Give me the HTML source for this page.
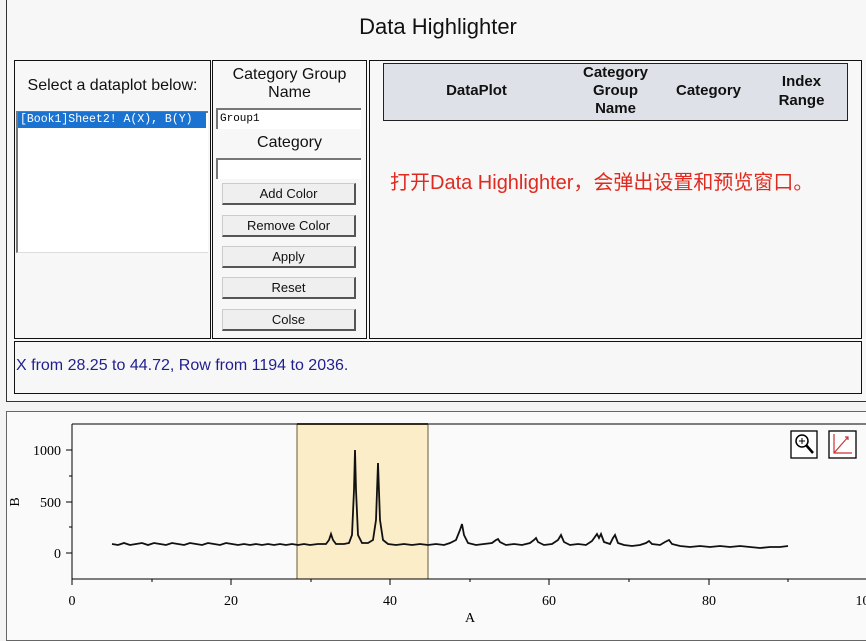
<!DOCTYPE html>
<html><head><meta charset="utf-8"><style>
body{margin:0;width:866px;height:630px;background:#f4f4f4;position:relative;overflow:hidden;font-family:"Liberation Sans",Arial,sans-serif;}
.a{position:absolute;box-sizing:border-box}
.bx{border:1.5px solid #111;background:#f7f7f7}
.btn{position:absolute;left:222px;width:134px;height:22px;background:#efefef;border:1px solid #ccc;border-right:2px solid #555;border-bottom:2px solid #555;font-size:13px;text-align:center;line-height:20px;box-sizing:border-box;color:#111}
</style></head><body>
<div class="a" style="left:6px;top:-2px;width:862px;height:404px;border:1.5px solid #333;background:#f7f7f7"></div>
<div class="a" style="left:0;top:14px;width:876px;text-align:center;font-size:22px;color:#111">Data Highlighter</div>
<div class="a bx" style="left:14px;top:60px;width:197px;height:279px"></div>
<div class="a" style="left:14px;top:77px;width:197px;text-align:center;font-size:16px;color:#111">Select a dataplot below:</div>
<div class="a" style="left:16px;top:111px;width:192px;height:142px;background:#fff;border-left:2px solid #777;border-top:2px solid #777;border-bottom:1px solid #ddd"></div>
<div class="a" style="left:18px;top:112px;width:188px;height:16px;background:#1a73d0;color:#fff;font-family:'Liberation Mono',monospace;font-size:11.5px;line-height:16px;padding-left:2px">[Book1]Sheet2! A(X), B(Y)</div>
<div class="a bx" style="left:212px;top:60px;width:155px;height:279px"></div>
<div class="a" style="left:212px;top:66px;width:155px;text-align:center;font-size:16px;line-height:18px;color:#111">Category Group<br>Name</div>
<div class="a" style="left:216px;top:108px;width:145px;height:21px;background:#fff;border-left:2px solid #777;border-top:2px solid #777;font-family:'Liberation Mono',monospace;font-size:11px;line-height:18px;padding-left:2px">Group1</div>
<div class="a" style="left:212px;top:134px;width:155px;text-align:center;font-size:16px;color:#111">Category</div>
<div class="a" style="left:216px;top:158px;width:145px;height:21px;background:#fff;border-left:2px solid #777;border-top:2px solid #777"></div>
<div class="btn" style="top:183px">Add Color</div>
<div class="btn" style="top:215px">Remove Color</div>
<div class="btn" style="top:246px">Apply</div>
<div class="btn" style="top:277px">Reset</div>
<div class="btn" style="top:309px">Colse</div>
<div class="a bx" style="left:369px;top:60px;width:493px;height:279px"></div>
<div class="a" style="left:383px;top:63px;width:465px;height:58px;background:#dfe1e9;border:1.5px solid #222;font-weight:bold;font-size:15px;color:#111">
<div class="a" style="left:0;width:185px;top:18px;text-align:center">DataPlot</div>
<div class="a" style="left:185px;width:93px;top:0px;line-height:18px;text-align:center">Category<br>Group<br>Name</div>
<div class="a" style="left:278px;width:93px;top:18px;text-align:center">Category</div>
<div class="a" style="left:371px;width:93px;top:8px;line-height:19px;text-align:center">Index<br>Range</div>
</div>
<div class="a" style="left:390px;top:166px;font-size:20px;color:#e02a1f;font-family:'Liberation Sans','Noto Sans CJK SC',sans-serif">打开Data Highlighter，会弹出设置和预览窗口。</div>
<div class="a bx" style="left:14px;top:341px;width:848px;height:53px"></div>
<div class="a" style="left:16px;top:357px;font-size:16px;color:#1f1f8f">X from 28.25 to 44.72, Row from 1194 to 2036.</div>
<div class="a" style="left:6px;top:411px;width:870px;height:230px;border:1.5px solid #666;background:#fafafa"></div>
<svg class="a" style="left:0;top:0" width="866" height="630" font-family="Liberation Serif,serif" font-size="14">
<rect x="297" y="424" width="131" height="155" fill="#fbedc8" stroke="#6a5a30" stroke-width="1"/>
<line x1="297" y1="424" x2="428" y2="424" stroke="#6a5a30" stroke-width="2"/>
<line x1="72" y1="424" x2="866" y2="424" stroke="#000"/>
<line x1="72" y1="424" x2="72" y2="579" stroke="#000"/>
<line x1="72" y1="579" x2="866" y2="579" stroke="#000"/>
<g stroke="#000">
<line x1="66" y1="450" x2="72" y2="450"/><line x1="66" y1="502" x2="72" y2="502"/><line x1="66" y1="553" x2="72" y2="553"/>
<line x1="69" y1="476" x2="72" y2="476"/><line x1="69" y1="527" x2="72" y2="527"/>
<line x1="72" y1="579" x2="72" y2="585"/><line x1="231" y1="579" x2="231" y2="585"/><line x1="390" y1="579" x2="390" y2="585"/><line x1="549" y1="579" x2="549" y2="585"/><line x1="709" y1="579" x2="709" y2="585"/>
<line x1="152" y1="579" x2="152" y2="582"/><line x1="311" y1="579" x2="311" y2="582"/><line x1="470" y1="579" x2="470" y2="582"/><line x1="629" y1="579" x2="629" y2="582"/><line x1="788" y1="579" x2="788" y2="582"/>
</g>
<g fill="#000" text-anchor="end"><text x="61" y="455">1000</text><text x="61" y="507">500</text><text x="61" y="558">0</text></g>
<g fill="#000" text-anchor="middle"><text x="72" y="605">0</text><text x="231" y="605">20</text><text x="390" y="605">40</text><text x="549" y="605">60</text><text x="709" y="605">80</text><text x="866" y="605">100</text><text x="470" y="622">A</text></g>
<text x="19" y="502" transform="rotate(-90 19 502)" text-anchor="middle" fill="#000">B</text>
<polyline fill="none" stroke="#111" stroke-width="1.8" points="112,544 118,545 124,543 130,545 136,544 142,543 148,545 154,543 160,544 166,545 172,543 178,544 184,545 190,543 196,544 202,545 208,543 214,544 220,545 226,543 232,544 238,545 244,544 250,545 256,544 262,545 268,544 274,545 280,544 286,545 292,544 298,545 304,544 310,545 318,544 326,544 329,540 331,534 333,540 336,544 344,544 349,543 352,535 354,490 355,450 356,490 358,535 362,543 368,543 373,540 376,520 378,463 380,520 383,540 388,544 396,545 404,544 412,545 420,544 428,545 436,544 444,545 450,543 456,540 460,530 462,524 464,535 468,543 476,545 484,544 492,543 496,540 498,539 500,542 506,545 514,544 522,545 530,543 534,540 536,538 538,542 544,545 552,544 558,540 561,535 564,542 570,545 578,544 586,545 592,541 597,534 599,538 601,534 604,542 610,544 613,538 615,535 618,543 624,545 632,546 640,545 646,543 649,541 652,544 660,545 665,542 669,540 672,544 680,546 690,547 700,546 710,547 720,546 730,547 740,546 750,547 760,548 770,547 780,547 788,546"/>
<rect x="791" y="431" width="26" height="27" fill="#fff" stroke="#000" stroke-width="1.3"/>
<circle cx="802" cy="441" r="6" fill="none" stroke="#000" stroke-width="1.5"/>
<line x1="806" y1="445" x2="813" y2="453" stroke="#000" stroke-width="2.5"/>
<path d="M802 438v6M799 441h6" stroke="#000" stroke-width="1"/>
<rect x="829" y="431" width="27" height="27" fill="#fff" stroke="#000" stroke-width="1.3"/>
<path d="M834 434v19h18M834 453l14-16M845 437h3v3" fill="none" stroke="#c33" stroke-width="1.2"/>
</svg>
</body></html>
